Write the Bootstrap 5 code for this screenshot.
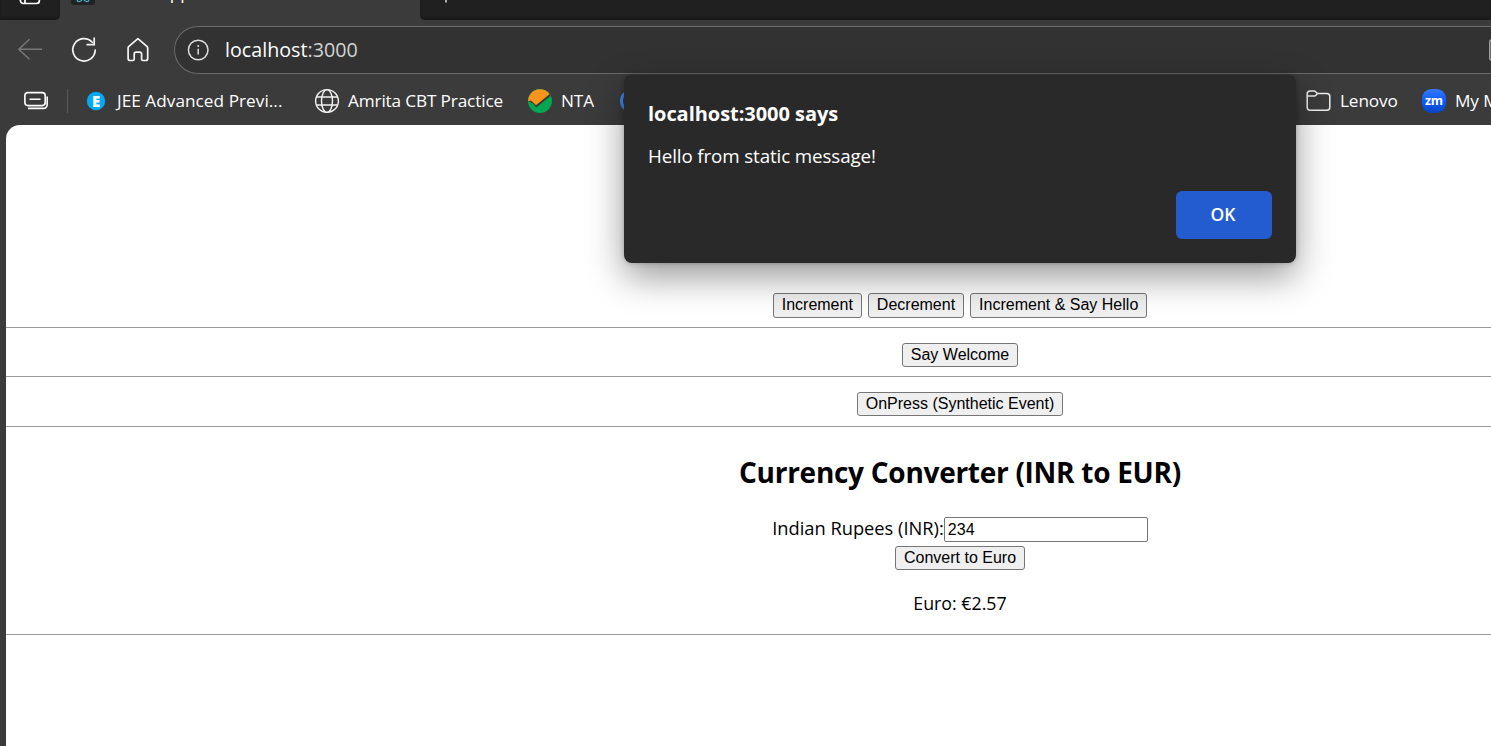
<!DOCTYPE html>
<html lang="en">
<head>
<meta charset="utf-8">
<meta name="viewport" content="width=device-width, initial-scale=1">
<title>localhost:3000</title>
<link href="https://cdn.jsdelivr.net/npm/bootstrap@5.3.0/dist/css/bootstrap.min.css" rel="stylesheet">
<style>
body{background:#3b3b3b;color:#fff;font-family:"Open Sans","Noto Sans",sans-serif;height:746px;overflow:hidden;position:relative}
svg{display:block;flex:none}
.tabstrip{height:20px;overflow:hidden;background:#3b3b3b}
.tab-side{background:#202020;width:60px;border-bottom-right-radius:5px;box-shadow:inset 0 -2px 2px #191919}
.tab-side svg{margin-left:19px;margin-top:-14px}
.tab-active{width:360px}
.tab-active svg{margin-left:11px}
.tab-text{font-size:17.2px;line-height:24px;margin:-19px 0 0 16px;letter-spacing:-.1px}
.tab-rest{background:#202020;border-bottom-left-radius:5px;box-shadow:inset 0 -2px 2px #191919}
.tab-rest svg{margin-left:17px}
.toolbar{height:60px}
.nav-icons{width:174px;padding-left:17px}
.address{height:48px;border:1.5px solid #6b6b6b;border-right:0;border-radius:24px 0 0 24px;background:#323232;font-size:19.7px;padding-left:11px}
.address-text{margin:0 0 0 15px}
.address .port{color:#d2d2d2}
.bookmarks{height:45px;padding:0 0 4px 24px;font-size:17.2px;letter-spacing:-.1px;overflow:hidden}
.bookmarks>*{flex:none}
.bookmarks .divider{width:1px;height:24px;background:#5a5a5a;margin:0 18px 0 19px}
.mark-jee{width:208px;padding-left:11px;letter-spacing:.04px}
.mark-amrita{width:188px;padding-left:8px;letter-spacing:-.14px}
.mark-nta{width:68px;padding-left:9px}
.mark-folder{width:90px;padding-left:8px}
.folder-icon{margin-left:662px}
.page-view{background:#fff;color:#000;margin-left:6px;height:621px;border-top-left-radius:14px;overflow:hidden}
.page-body{width:1908px;padding-top:168px;font-size:18.3px}
.btn-native{background:#efefef;border:1px solid #767676;border-radius:3px;color:#000;font:16px/22px "Liberation Sans",Arial,sans-serif;height:24px;padding:0 8px;white-space:nowrap}
.counter .btn-native{height:25px;padding-bottom:2px}
.rule{height:1px;background:#9a9a9a}
.field{border:1px solid #767676;border-radius:2px;width:204px;height:25px;padding:0 3px;font:16px "Liberation Sans",Arial,sans-serif;color:#000}
.heading{font-size:28px;font-weight:700;line-height:40px;letter-spacing:-.28px;margin:25px 0}
.inr-row label{margin-top:-3px}
.result{font-size:17.8px;line-height:24px;margin:21px 0 19px}
.dialog-box{position:absolute;left:624px;top:75px;width:672px;height:188px;background:#292929;border-radius:8px;box-shadow:0 14px 36px rgba(0,0,0,.4),0 0 5px rgba(0,0,0,.25);padding:25px 24px 24px}
.dialog-title{font-size:20px;font-weight:700;line-height:28px;letter-spacing:-.05px}
.dialog-text{font-size:18.8px;line-height:28px;letter-spacing:-.12px;margin-top:14px}
.btn-ok{background:#235ccf;color:#fff;width:96px;height:48px;border-radius:6px;font-size:17.5px;font-weight:600;border:0;padding:0 2px 1px 0}
</style>
</head>
<body>
<header>
  <div class="tabstrip d-flex">
    <div class="tab-side"><svg width="22" height="20" viewBox="0 0 22 20" fill="none" stroke="#fff" stroke-width="1.7"><rect x="1.4" y="1.5" width="19" height="16" rx="3"/><path d="M6 5v12.5"/></svg></div>
    <div class="tab-active d-flex align-items-start">
      <svg width="24" height="5" viewBox="0 0 24 5"><path d="M0 0h24v2a3 3 0 0 1-3 3H3a3 3 0 0 1-3-3z" fill="#202225"/><path d="M6 0q.5 1.800 2.500 1.500Q10.500 1 11 0M13 0q.5 1 2.500 1.500Q17.500 1.800 18 0" fill="none" stroke="#4ab6d2" stroke-width="1.200"/></svg>
      <div class="tab-text">React App</div>
    </div>
    <div class="tab-rest flex-fill"><svg width="16" height="4" viewBox="0 0 16 4"><path d="M9 0v2.5" stroke="#ddd" stroke-width="1.5"/></svg></div>
  </div>
  <div class="toolbar d-flex align-items-center">
    <div class="nav-icons d-flex align-items-center">
      <svg width="26" height="26" viewBox="0 0 26 26" fill="none" stroke="#777" stroke-width="1.5"><path d="M25 12.3H2M12.5 2.3L1.8 12.3l10.7 10"/></svg>
      <svg style="margin-left:27px" width="28" height="28" viewBox="0 0 28 28" fill="none" stroke="#f5f5f5" stroke-width="1.7" stroke-linecap="round"><path d="M22.300 6.300A11.200 11.200 0 1 0 25.200 14M24.200 2.200v6.500h-7"/></svg>
      <svg style="margin-left:27px" width="26" height="28" viewBox="0 0 26 28" fill="none" stroke="#f5f5f5" stroke-width="1.700" stroke-linejoin="round"><path d="M12.900 2.700L3.900 10.300q-.8.700-.8 1.800v10.400q0 2 2 2h2.800q1.300 0 1.300-1.300v-5q0-2 2-2h3.400q2 0 2 2v5q0 1.300 1.300 1.300h2.800q2 0 2-2v-10.400q0-1.100-.8-1.800z"/></svg>
    </div>
    <div class="address flex-fill d-flex align-items-center">
      <svg width="24" height="24" viewBox="0 0 24 24" fill="none" stroke="#ddd" stroke-width="1.5"><circle cx="12.2" cy="12" r="9.8"/><path d="M12.2 10.8v5.8" /><circle cx="12.2" cy="8" r="1" fill="#ddd" stroke="none"/></svg>
      <div class="address-text">localhost<span class="port">:3000</span></div>
      <svg class="ms-auto" width="2" height="24" viewBox="0 0 2 24"><path d="M2 2Q.8 2 .8 4v16q0 2 1.200 2" stroke="#aaa" fill="none" stroke-width="1.4"/></svg>
    </div>
  </div>
  <nav class="bookmarks d-flex align-items-center text-nowrap">
    <svg width="24" height="20" viewBox="0 0 24 20" fill="none" stroke="#fff" stroke-width="1.6"><rect x=".9" y="1.600" width="20.300" height="13" rx="3"/><path d="M5.500 8.300h11M4 17.400h15q4.200 0 4.200-4.200V5.500"/></svg>
    <div class="divider"></div>
    <svg width="20" height="20" viewBox="0 0 20 20"><circle cx="10" cy="10" r="9.2" fill="#03a9f4"/><text x="10" y="15.500" text-anchor="middle" font-family="Open Sans" font-size="15" font-weight="800" fill="#fff">E</text></svg>
    <div class="mark-jee">JEE Advanced Previ...</div>
    <svg width="26" height="26" viewBox="0 0 26 26" fill="none" stroke="#f2f2f2" stroke-width="1.400"><circle cx="13" cy="13" r="11.400"/><ellipse cx="13" cy="13" rx="5.500" ry="11.400"/><path d="M2.400 9h21.200M2.400 17h21.200"/></svg>
    <div class="mark-amrita">Amrita CBT Practice</div>
    <svg width="24" height="24" viewBox="0 0 24 24"><circle cx="12" cy="12" r="12" fill="#00a651"/><path d="M0 12a12 12 0 0 1 22.400-5.800L7.800 16.500Q4 12 0 12z" fill="#f7941e"/><path d="M0 12.200l3-.6 5 4.700L21.700 5l1 1.700L8.200 18.600Q5 13.200 0 12.200z" fill="#373a2b"/></svg>
    <div class="mark-nta">NTA</div>
    <svg width="24" height="24" viewBox="0 0 24 24"><circle cx="12" cy="12" r="10.500" fill="#26395b" stroke="#4285f4" stroke-width="3"/></svg>
    <svg class="folder-icon" width="26" height="24" viewBox="0 0 26 24" fill="none" stroke="#eee" stroke-width="1.500"><path d="M1.200 5v13.200q0 3 3 3h16.600q3 0 3-3V7.500q0-3-3-3H11.500L9.600 2.700Q9 2 8 2H4.200q-3 0-3 3zM1.200 7h7q1.100 0 1.800-.8l1.500-1.700"/></svg>
    <div class="mark-folder">Lenovo</div>
    <svg width="24" height="24" viewBox="0 0 24 24"><defs><linearGradient id="zg" x2="0" y2="1"><stop stop-color="#3479ff"/><stop offset=".5" stop-color="#0b5cff"/><stop offset="1" stop-color="#0845bd"/></linearGradient></defs><rect width="24" height="24" rx="9.500" fill="url(#zg)"/><text x="12" y="16" text-anchor="middle" font-family="Open Sans" font-size="12.500" font-weight="700" fill="#fff" textLength="18">zm</text></svg>
    <div style="padding-left:9px">My M</div>
  </nav>
</header>
<main class="page-view">
  <div class="page-body d-flex flex-column align-items-center">
    <div class="counter d-flex"><button class="btn-native">Increment</button><button class="btn-native" style="margin:0 6px">Decrement</button><button class="btn-native">Increment &amp; Say Hello</button></div>
    <div class="rule w-100" style="margin:9px 0 15px"></div>
    <button class="btn-native">Say Welcome</button>
    <div class="rule w-100" style="margin:9px 0 15px"></div>
    <button class="btn-native">OnPress (Synthetic Event)</button>
    <div class="rule w-100" style="margin-top:10px"></div>
    <h2 class="heading">Currency Converter (INR to EUR)</h2>
    <div class="inr-row d-flex align-items-center" style="height:25px"><label for="inr">Indian Rupees (INR):</label><input id="inr" class="field" value="234"></div>
    <button class="btn-native" style="margin-top:4px">Convert to Euro</button>
    <div class="result">Euro: €2.57</div>
    <div class="rule w-100"></div>
  </div>
</main>
<div class="dialog-box d-flex flex-column">
  <div class="dialog-title">localhost:3000 says</div>
  <div class="dialog-text">Hello from static message!</div>
  <button class="btn-ok mt-auto ms-auto">OK</button>
</div>
<script src="https://cdn.jsdelivr.net/npm/bootstrap@5.3.0/dist/js/bootstrap.bundle.min.js"></script>
</body>
</html>
